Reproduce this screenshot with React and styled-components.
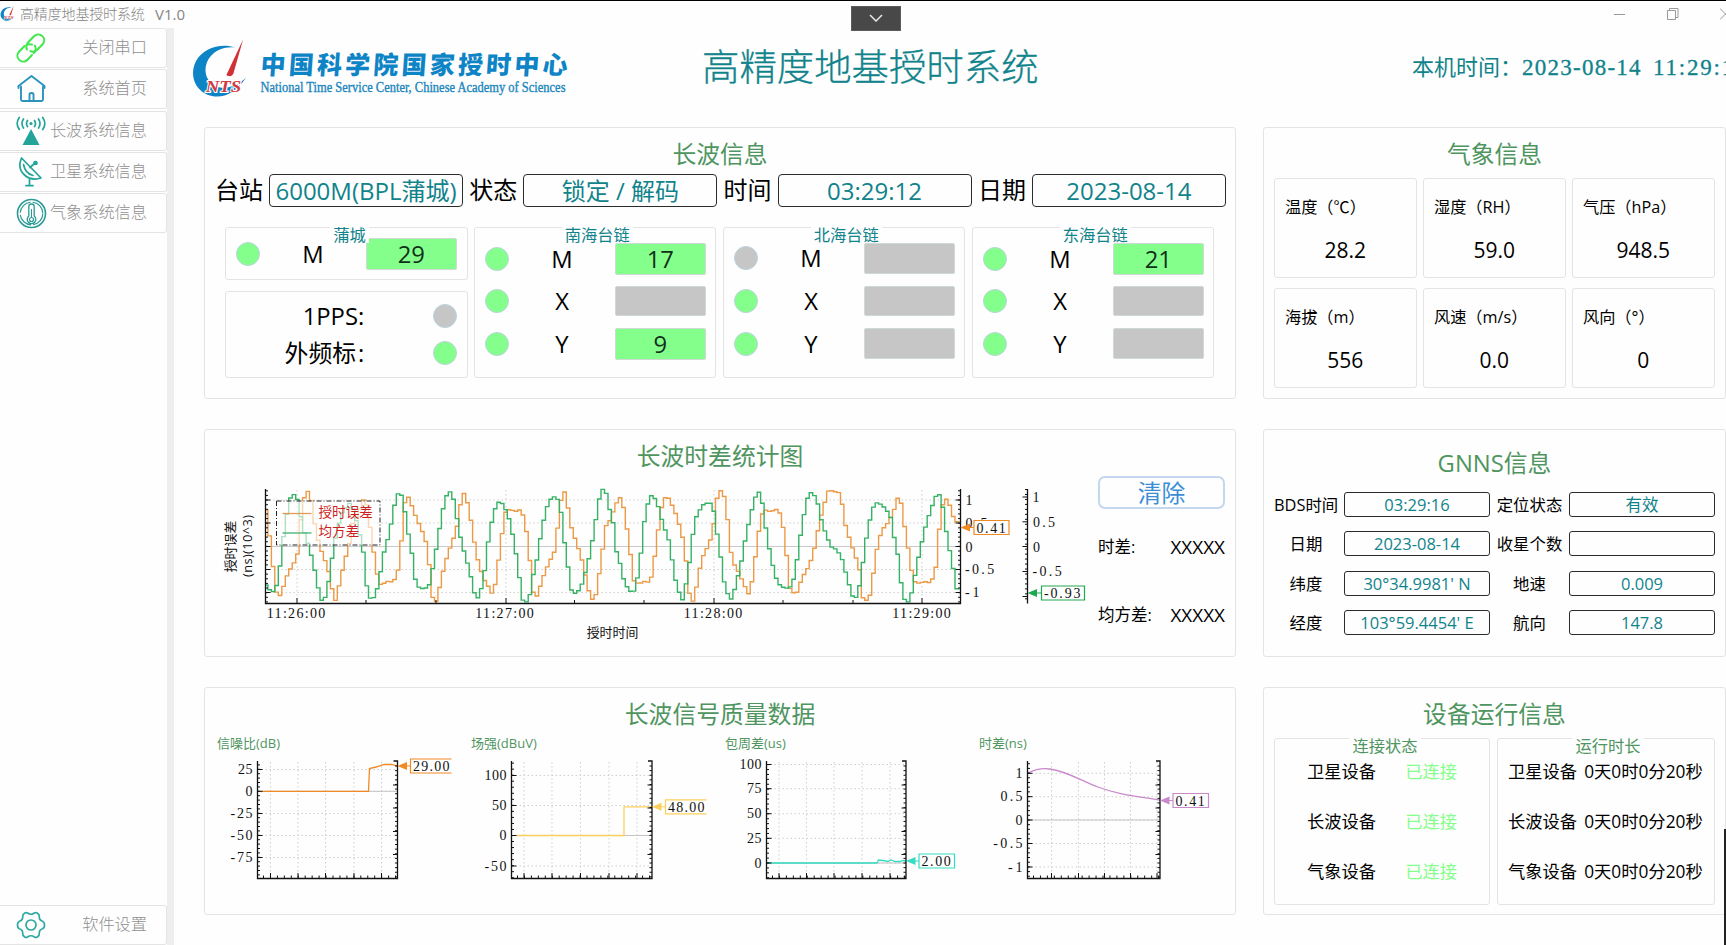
import React from "react";
import styled, { createGlobalStyle } from "styled-components";

const UI = `"Open Sans", "Noto Sans CJK SC", sans-serif`;
const SERIF = `"Liberation Serif", "Noto Sans CJK SC", serif`;
const TEAL = "#10838b";
const GREEN = "#4f9560";
const ON = "#85ff8b";
const OFF = "#c6c6c6";
const LINE = "#e4e4e4";

const Global = createGlobalStyle`
  html, body { margin: 0; padding: 0; background: #fff; }
  * { box-sizing: border-box; }
`;

const Window = styled.div`
  position: relative;
  width: 1726px;
  height: 945px;
  overflow: hidden;
  display: flex;
  flex-direction: column;
  background: #fefefe;
  border-top: 1px solid #000;
  font-family: ${UI};
  color: #000;
  white-space: nowrap;
`;

const TitleBar = styled.header`
  display: flex;
  align-items: center;
  height: 27px;
  flex: none;
  color: #858585;
  font-size: 14px;
  line-height: 20px;
  padding-bottom: 2px;
  font-family: "Open Sans", "Noto Sans CJK SC", sans-serif;
  font-weight: 300;
`;
const AppName = styled.span`
  margin-left: 5px;
  width: 135px;
  letter-spacing: -0.15px;
`;
const Version = styled.span`
  font-size: 15px;
  font-weight: 400;
  flex: 1;
`;
const WindowButtons = styled.div`
  display: flex;
  gap: 41px;
  width: 112px;
  flex: none;
  svg { flex: none; }
`;

const PullTab = styled.div`
  position: absolute;
  left: 851px;
  top: 5px;
  width: 50px;
  height: 25px;
  background: #484848;
  border: 1px solid #5c5c5c;
  display: flex;
  align-items: center;
  justify-content: center;
  padding-bottom: 2px;
`;
const EdgeShadow = styled.div`
  position: absolute;
  right: 0;
  bottom: 0;
  width: 2px;
  height: 116px;
  background: #222;
`;

const Body = styled.div`
  display: flex;
  flex: 1;
  min-height: 0;
`;
const Sidebar = styled.nav`
  width: 167px;
  flex: none;
  display: flex;
  flex-direction: column;
  gap: 1.3px;
`;
const NavItem = styled.div`
  height: 40px;
  margin-top: ${(p) => (p.$last ? "auto" : 0)};
  border: 1px solid ${LINE};
  border-left: 0;
  border-radius: 0 3px 3px 0;
  padding: 0 19px 0 16px;
  display: flex;
  align-items: center;
  justify-content: space-between;
  color: #909090;
  font-family: ${SERIF};
  font-weight: 300;
  font-size: 16.2px;
  line-height: 20px;
  svg { flex: none; }
  span { margin-left: -10px; }
`;
const Divider = styled.div`
  width: 7px;
  flex: none;
  background: #eeeeee;
`;
const Main = styled.main`
  flex: 1;
  min-width: 0;
`;
const Banner = styled.div`
  height: 99px;
  display: flex;
  padding-left: 14px;
`;
const BannerTitle = styled.h1`
  margin: 19px 0 0 130px;
  width: 710px;
  flex: none;
  font-family: ${SERIF};
  font-weight: 300;
  font-size: 37.4px;
  line-height: 44px;
  color: ${TEAL};
  -webkit-text-stroke: 0.3px ${TEAL};
`;
const Clock = styled.div`
  display: flex;
  flex: none;
  margin-top: 26px;
  font-family: ${SERIF};
  font-size: 22px;
  line-height: 28px;
  font-weight: 400;
  color: ${TEAL};
`;
const ClockDate = styled.span`
  width: 131px;
  font-size: 23px;
  letter-spacing: 1.25px;
  -webkit-text-stroke: 0.3px ${TEAL};
`;
const ClockTime = styled.span`
  font-size: 23px;
  letter-spacing: 1.8px;
  -webkit-text-stroke: 0.3px ${TEAL};
`;

const Board = styled.div`
  display: grid;
  grid-template-columns: 1032px 463px;
  grid-template-rows: 272px 228px 228px;
  gap: 30px 27px;
  padding-left: 30px;
`;
const Panel = styled.section`
  border: 1px solid ${LINE};
  border-radius: 3px;
  padding: ${(p) => p.$top || 11}px 10px 0;
`;
const PanelTitle = styled.h2`
  margin: 0;
  text-align: center;
  font-weight: 400;
  font-size: 23.8px;
  line-height: 30px;
  color: ${GREEN};
`;

const Fields = styled.div`
  display: grid;
  grid-template-columns: repeat(4, 254.3px);
  margin-top: 5px;
`;
const Field = styled.div`
  display: flex;
  font-size: 24px;
  line-height: 32px;
  height: 33px;
`;
const FieldLabel = styled.span`
  width: 54px;
`;
const FieldBox = styled.span`
  width: 194px;
  border: 1px solid #2b2b2b;
  border-radius: 4px;
  text-align: center;
  color: ${TEAL};
`;

const Stations = styled.div`
  display: grid;
  grid-template-columns: repeat(4, 242px);
  gap: 7px;
  margin: 20px 0 0 10.25px;
  height: 151px;
`;
const StationStack = styled.div`
  display: grid;
  grid-template-rows: 53px 87px;
  gap: 11px;
`;
const Group = styled.div`
  border: 1px solid ${LINE};
  border-radius: 3px;
`;
const Legend = styled.div`
  width: max-content;
  margin: -1px auto 0;
  padding: 0 3px;
  position: relative;
  left: ${(p) => p.$shift || 0}px;
  background: #fefefe;
  color: ${(p) => p.$color || TEAL};
  font-size: 16.3px;
  line-height: 16px;
`;
const Signals = styled.div`
  display: flex;
  flex-direction: column;
  gap: 12.2px;
  margin-top: ${(p) => p.$top}px;
`;
const Signal = styled.div`
  display: grid;
  grid-template-columns: 24px 105.5px 91px;
  align-items: center;
  padding-left: 10px;
  height: 30.5px;
  font-size: 23.8px;
  line-height: 30px;
  text-align: center;
`;
const Lamp = styled.i`
  width: 24px;
  height: 24px;
  border-radius: 50%;
  border: 1px solid #bcd3de;
  background: ${(p) => (p.$on ? ON : OFF)};
`;
const Level = styled.span`
  height: 100%;
  border-radius: 2px;
  border: 1px solid #cfdad4;
  background: ${(p) => (p.$on ? ON : OFF)};
  color: #10301a;
`;
const Clocks = styled(Group)`
  padding: 6px 10px 0 0;
`;
const ClockRow = styled.div`
  display: grid;
  grid-template-columns: 138px 92.5px;
  justify-items: end;
  align-items: center;
  height: 36.5px;
  font-size: 23.8px;
  line-height: 34px;
`;
const Colon = styled.span`
  margin-left: ${(p) => p.$gap || 0}px;
`;

const WeatherGrid = styled.div`
  display: grid;
  grid-template-columns: repeat(3, 142.5px);
  grid-auto-rows: 100px;
  gap: 10px 6.5px;
  margin-top: 9px;
`;
const WeatherCard = styled(Group)`
  padding: 17px 0 0 10px;
  font-size: 16.2px;
  line-height: 22px;
`;
const Reading = styled.div`
  margin: 17px 10px 0 0;
  text-align: center;
  font-size: 21px;
  line-height: 30px;
`;

const ChartRow = styled.div`
  display: flex;
  margin-top: 4px;
`;
const ChartSide = styled.div`
  margin-left: 7px;
  width: 127px;
  padding-top: 1px;
`;
const ClearButton = styled.button`
  display: block;
  width: 127px;
  height: 33px;
  padding: 0;
  background: #fefefe;
  border: 2px solid #c3d7ee;
  border-radius: 7px;
  font-family: ${UI};
  font-size: 23.8px;
  line-height: 31px;
  color: #3b8ed6;
`;
const Stat = styled.div`
  display: flex;
  justify-content: space-between;
  margin-top: ${(p) => p.$top}px;
  font-size: 16.5px;
  line-height: 24px;
  b { font-weight: 400; font-size: 18.9px; }
`;

const MiniRow = styled.div`
  display: grid;
  grid-template-columns: repeat(4, 254px);
  padding-left: 1px;
  margin-top: 5px;
`;
const MiniTitle = styled.div`
  padding-left: 1px;
  margin-bottom: 1px;
  font-size: 13px;
  line-height: 18px;
  color: ${GREEN};
`;
const MiniSvg = styled.svg`
  display: block;
  overflow: visible;
`;

const GnssGrid = styled.div`
  display: grid;
  grid-template-columns: 70px 146px 79px 146px;
  grid-auto-rows: 25px;
  row-gap: 14.4px;
  margin-top: 14px;
`;
const GnssLabel = styled.span`
  font-size: 16.4px;
  line-height: 25px;
  text-align: center;
  padding-right: ${(p) => p.$pad || 0}px;
`;
const GnssBox = styled.span`
  border: 1px solid #2b2b2b;
  border-radius: 3px;
  text-align: center;
  font-size: 16.5px;
  line-height: 23px;
  color: ${TEAL};
`;

const DeviceRow = styled.div`
  display: grid;
  grid-template-columns: 216px 218px;
  gap: 7px;
  height: 166px;
  margin-top: 8.5px;
`;
const DeviceLine = styled.div`
  display: flex;
  height: 50px;
  gap: ${(p) => p.$gap}px;
  padding-left: ${(p) => p.$left}px;
  font-size: 17.3px;
  line-height: 36px;
`;
const Linked = styled.span`
  color: ${ON};
`;

/* ---------- icons ---------- */
const LinkIcon = () => (
  <svg width="30" height="30" viewBox="0 0 30 30" fill="none" stroke="#3fe84a" strokeWidth="2" strokeLinecap="round">
    <path d="M11 16.5C9.800 14 10.200 11.500 12 9.500L18 3.300C20.500 .8 24 .8 26.400 3.100C28.800 5.500 28.800 9 26.400 11.500L21 17C18.800 19 16.500 19.200 14.300 18.200" />
    <path d="M18.800 12.500C20.200 15 19.800 18 17.800 20M16 22L11.500 26.700C9 29.200 5.500 29.200 3.200 26.900C.8 24.500 .8 21 3.200 18.500L8.500 13M11.500 11.600C12.900 11 14.500 11 16 11.600" />
  </svg>
);
const HomeIcon = () => (
  <svg width="30" height="30" viewBox="0 0 30 30" fill="none" stroke="#2b93bf" strokeWidth="1.900" strokeLinejoin="round" strokeLinecap="round">
    <path d="M2.500 14V12L15.500 2L28.500 12V14" />
    <path d="M5 12.500V25.500Q5 27 6.500 27H25.500Q27 27 27 25.500V12.500" />
    <path d="M13.500 26.500V20.500Q13.500 19 15.500 19T17.500 20.500V26.500" />
  </svg>
);
const TowerIcon = () => (
  <svg width="30" height="30" viewBox="0 0 30 30" fill="none" stroke="#23a49b" strokeWidth="1.700" strokeLinecap="round">
    <circle cx="15" cy="7.500" r="1.600" fill="#23a49b" stroke="none" />
    <path d="M11.500 4.500Q9.500 7.500 11.500 10.500M18.500 4.500Q20.500 7.500 18.500 10.500M7.500 3Q4.500 7.500 7.500 12M22.500 3Q25.500 7.500 22.500 12M3.300 1.500Q-1 7.500 3.300 13.500M26.700 1.500Q31 7.500 26.700 13.500" />
    <path d="M15 13L23.500 29H6.500Z" fill="#23a49b" stroke="none" />
  </svg>
);
const DishIcon = () => (
  <svg width="30" height="30" viewBox="0 0 30 30" fill="none" stroke="#23a49b" strokeWidth="1.700" strokeLinecap="round" strokeLinejoin="round">
    <path d="M5.500 1C2.500 8 4 14 8.500 18C13 22 19 23 25 21Z" />
    <path d="M7.500 7.500C8.500 13 12 17 17 18.500M14 10.500L18.500 6.500" />
    <circle cx="19.500" cy="6" r="1.500" fill="#23a49b" />
    <path d="M13.500 22.500V28M10 28.700H17" />
  </svg>
);
const ThermoIcon = () => (
  <svg width="31" height="31" viewBox="0 0 31 31" fill="none" stroke="#2a9a94">
    <circle cx="15.500" cy="15.500" r="14" strokeWidth="1.600" />
    <circle cx="15.500" cy="15.500" r="11.300" strokeWidth="1.200" strokeDasharray="16 2 16 2" />
    <path d="M12.800 18V8.500Q12.800 6 15.500 6T18.200 8.500V18A4.300 4.300 0 1 1 12.800 18Z" strokeWidth="1.300" fill="#fefefe" />
    <path d="M15.500 11V20" strokeWidth="1" />
    <circle cx="15.500" cy="21.500" r="2" strokeWidth="1.200" />
  </svg>
);
const GearIcon = () => (
  <svg width="30" height="30" viewBox="0 0 30 30" fill="none" stroke="#2fa9a2" strokeWidth="1.700" strokeLinejoin="round">
    <path d="M8.500 3.200Q10 2 11.500 3Q15 5.500 18.500 3Q20 2 21.500 3.200Q23.500 4.500 23.300 6.500Q23 10 26.500 11.200Q28.500 12 28.500 15Q28.500 18 26.500 18.800Q23 20 23.300 23.500Q23.500 25.500 21.500 26.800Q20 28 18.500 27Q15 24.500 11.500 27Q10 28 8.500 26.800Q6.500 25.500 6.700 23.500Q7 20 3.500 18.800Q1.500 18 1.500 15Q1.500 12 3.500 11.200Q7 10 6.700 6.500Q6.500 4.500 8.500 3.200Z" />
    <circle cx="15" cy="15" r="5" />
  </svg>
);

const Crescent = ({ w, h }) => (
  <svg width={w} height={h} viewBox="0 0 58 60">
    <path d="M45 8C30 3 12 9 5 22C-3 38 6 56 24 58C36 59 46 53 56 39C46 48 34 52 24 47C13 41 12 26 20 17C26 10 35 7 45 8Z" fill="#0d84c5" />
    <path d="M53 0L43 35Q40 39 36 36Z" fill="#cf3136" />
    <text x="15" y="53" fontFamily="Liberation Serif, serif" fontWeight="700" fontStyle="italic" fontSize="17" fill="#d2383d" stroke="#fff" strokeWidth="2" paintOrder="stroke" textLength="36" lengthAdjust="spacingAndGlyphs">NTS</text>
  </svg>
);
const BrandSvg = styled.svg`
  flex: none;
  margin-top: 9px;
`;
const Brand = () => (
  <BrandSvg width="384" height="70" viewBox="188 37 384 70">
    <g transform="translate(191 39)"><Crescent w="57" h="60" /></g>
    <text transform="translate(260 73.500) skewX(-4)" fontFamily="'Noto Sans CJK SC', sans-serif" fontWeight="900" fontSize="25" fill="#0d84c5" textLength="307">中国科学院国家授时中心</text>
    <text x="260.500" y="92" fontFamily="Liberation Serif, serif" fontSize="14" fill="#1b86bd" stroke="#1b86bd" strokeWidth=".35" textLength="305" lengthAdjust="spacingAndGlyphs">National Time Service Center, Chinese Academy of Sciences</text>
  </BrandSvg>
);

/* ---------- charts ---------- */
const AxisText = ({ x, y, children, anchor = "start" }) => (
  <text x={x} y={y + 4.7} textAnchor={anchor} fontFamily="Liberation Serif, serif" fontSize="14" fill="#111" textLength={children.length * 7.3}>
    {children}
  </text>
);

const Marker = ({ tip, y, x, w, color, open, children }) => (
  <g>
    <path d={`M${tip} ${y}L${tip + 9.5} ${y - 4}V${y + 4}Z`} fill={color} />
    <path d={`M${tip + 9} ${y}H${x}`} stroke={color} />
    <rect x={x} y={y - 7} width={w} height="14" fill="#fefefe" />
    <path d={open ? `M${x + w} ${y - 7}H${x}V${y + 7}H${x + w}` : `M${x} ${y - 7}H${x + w}V${y + 7}H${x}Z`} fill="none" stroke={color} strokeWidth="1.200" />
    <AxisText x={x + 2.5} y={y + 0.5}>{children}</AxisText>
  </g>
);

const greenEarly = [200,495,208,508,222,515,232,495,243,430,252,350,262,285,272,235,285,222,293,235,302,280,312,330,325,370,338,415,350,470,360,525,370,549,380,525,390,470,402,385,415,320,430,275,450,250,463,270,475,320,490,380,500,490,510,530,517,543,530,520,540,475,555,390,570,340,582,270,592,225,602,216,612,240,622,320,635,380,645,470,655,500,672,507,688,500,698,455,708,400,718,340,730,270,738,235,748,212,758,222,768,260,775,315,788,375,800,415,812,460,825,520,838,537,848,495,858,440,868,350,880,290,892,250,903,244,915,260,930,300,945,370,958,460,970,540,987,549,1000,470,1012,420,1025,340,1038,275,1050,240,1068,228,1082,250,1092,345,1104,430,1116,510,1130,523,1145,500,1160,450,1172,400,1185,325,1197,245,1208,208,1218,209,1228,260,1240,300,1252,400,1265,440,1275,490,1298,520,1310,505,1318,440,1328,375,1338,270,1355,227,1368,237,1380,270,1392,320,1405,345,1418,420,1430,490,1448,545,1460,490,1472,415,1482,330,1492,285,1510,255];
const greenLate = [30,246,42,275,52,345,63,420,73,495,85,530,93,538,103,505,115,455,125,410,135,345,150,280,160,235,175,213,182,245,192,320,205,400,218,460,228,490,248,506,265,500,278,465,288,380,300,305,310,245,320,216,333,225,345,255,355,305,368,345,382,380,400,390,415,420,428,470,440,515,450,543,462,515,472,450,482,370,495,300,508,250,520,248,540,265,555,290,565,350,577,410,587,500,598,548,608,545,620,505,630,440,645,370,660,305,672,270,685,230,697,224,705,250,713,310,722,370,735,430,742,490,750,517];
const orangeEarly = [200,270,203,290,212,360,222,450,230,515,243,528,255,490,265,460,280,435,293,410,300,330,308,270,316,225,330,208,338,260,350,340,365,390,380,430,392,470,400,520,410,546,420,490,435,425,450,370,462,300,475,290,487,245,498,232,508,290,520,380,530,440,537,490,547,495,562,484,582,486,595,455,605,375,615,250,628,230,645,280,660,315,673,345,685,385,692,465,700,535,712,546,722,495,735,435,748,395,762,355,775,310,785,240,797,212,805,255,818,320,828,390,840,440,855,480,868,502,880,526,890,480,900,400,912,310,920,268,935,270,950,274,965,268,975,300,985,360,995,460,1000,515,1012,528,1022,500,1035,460,1050,425,1065,395,1075,320,1085,240,1097,212,1105,260,1115,320,1130,365,1145,410,1160,475,1172,530,1185,546,1195,490,1207,410,1218,320,1232,300,1245,265,1258,232,1268,235,1278,300,1290,370,1300,480,1318,492,1335,484,1352,488,1362,440,1372,360,1382,290,1392,232,1408,235,1425,270,1438,310,1450,355,1462,440,1472,540,1485,545,1495,470,1510,410,1525,380,1540,340,1547,270,1555,225];
const orangeLate = [62,212,72,230,82,300,90,390,102,435,115,460,130,495,145,527,155,470,165,390,177,300,187,268,205,275,230,266,240,310,250,350,255,440,263,505,280,527,292,490,305,460,320,435,335,380,348,310,360,260,375,210,405,218,415,255,425,320,440,370,455,415,465,450,475,535,492,545,505,460,517,375,530,330,550,305,565,270,577,230,588,255,597,330,610,410,620,480,632,490,662,484,672,492,687,440,695,340,705,260,713,232,725,250,737,290,750,310];

const series = (early, late) => {
  const pts = [];
  for (let i = 0; i < early.length; i += 2) pts.push([200 + early[i] / 3, 420 + early[i + 1] / 3]);
  for (let i = 0; i < late.length; i += 2) pts.push([700 + late[i] / 2.904, 420 + late[i + 1] / 3]);
  return pts;
};

// One sample per second, held until the next one arrives.
const stepPath = (pts) => {
  const step = 3.47;
  let k = 0;
  let d = `M${pts[0][0]} ${pts[0][1]}`;
  for (let x = pts[0][0] + step; x < 960; x += step) {
    while (k < pts.length - 2 && pts[k + 1][0] < x) k += 1;
    const [x0, y0] = pts[k];
    const [x1, y1] = pts[k + 1];
    const t = Math.min(1, (x - x0) / (x1 - x0));
    d += `H${(x - step / 2).toFixed(1)}V${(y0 + (y1 - y0) * t).toFixed(1)}`;
  }
  return `${d}H960`;
};
const greenPath = stepPath(series(greenEarly, greenLate));
const orangePath = stepPath(series(orangeEarly, orangeLate));

const span = (from, to, step) => {
  const out = [];
  for (let v = from; v <= to; v += step) out.push(v);
  return out;
};

const TimeChart = () => (
  <svg width="876" height="170" viewBox="215.500 475 876 170" fill="none">
    <g stroke="#cfcfcf" strokeWidth="1" strokeDasharray="1.500 2.500">
      {[500, 523, 569.5, 592.5].map((y) => <path key={y} d={`M266 ${y}H961`} />)}
      {[297.5, 506.5, 714.5, 922.5].map((x) => <path key={x} d={`M${x} 490V603`} />)}
    </g>
    <path d="M266 546.500H961" stroke="#c9c9c9" />
    <path d={orangePath} stroke="#ec9a45" strokeWidth="1.400" />
    <path d={greenPath} stroke="#35b265" strokeWidth="1.400" />
    <path d="M266 489V603.500H961V489M1028 489V603.500" stroke="#111" strokeWidth="1.300" />
    <g stroke="#111">
      {[500, 523, 546.5, 569.5, 592.5].map((y) => <path key={y} d={`M266 ${y}h5M961 ${y}h-5`} />)}
      {span(490.8, 603, 4.63).map((y) => <path key={y} d={`M266 ${y}h2.500M961 ${y}h-2.500`} />)}
      {[497, 521.8, 546.5, 571.5, 596.5].map((y) => <path key={y} d={`M1028 ${y}h-5`} />)}
      {span(489.5, 603.5, 4.97).map((y) => <path key={y} d={`M1028 ${y}h-2.500`} />)}
      {[297.5, 506.5, 714.5, 922.5].map((x) => <path key={x} d={`M${x} 603v-5`} />)}
      {[366.5, 436.5, 575, 644.5, 783.5, 853.5].map((x) => <path key={x} d={`M${x} 603v-3`} />)}
    </g>
    {["11:26:00", "11:27:00", "11:28:00", "11:29:00"].map((t, i) => (
      <AxisText key={t} x={296.5 + i * 208.5} y={613.3} anchor="middle">{t}</AxisText>
    ))}
    <AxisText x={966} y={500.5}>1</AxisText>
    <AxisText x={966} y={523}>0.5</AxisText>
    <AxisText x={966} y={547}>0</AxisText>
    <AxisText x={965.5} y={569.5}>-0.5</AxisText>
    <AxisText x={965.5} y={592.5}>-1</AxisText>
    <AxisText x={1033} y={497.5}>1</AxisText>
    <AxisText x={1033.5} y={522}>0.5</AxisText>
    <AxisText x={1033.5} y={547}>0</AxisText>
    <AxisText x={1033} y={571.5}>-0.5</AxisText>
    <Marker tip={961} y={527.5} x={974.5} w={35} color="#f08a24">0.41</Marker>
    <Marker tip={1028} y={593} x={1042} w={43} color="#20a850">-0.93</Marker>
    <rect x="277" y="501" width="103.500" height="44" fill="#fff" fillOpacity=".6" stroke="#222" strokeDasharray="5 2 1 2" />
    <path d="M283 513.500h29" stroke="#e39a55" strokeWidth="1.300" />
    <path d="M283 533h29" stroke="#45b172" strokeWidth="1.300" />
    <g fontFamily="'Noto Sans CJK SC', sans-serif" fill="#cc1f1f" fontSize="13.600">
      <text x="319" y="516.500">授时误差</text>
      <text x="319" y="535.500">均方差</text>
    </g>
    <g fontFamily="'Open Sans', 'Noto Sans CJK SC', sans-serif" fill="#111" fontSize="12.900" textAnchor="middle">
      <text transform="translate(235 546.500) rotate(-90)">授时误差</text>
      <text transform="translate(252.500 546) rotate(-90)" textLength="62">(ns)(10^3)</text>
      <text x="613" y="637">授时时间</text>
    </g>
  </svg>
);

const minis = [
  { title: "信噪比(dB)", l: 257.5, r: 397.5, grid: [270.5, 298, 325.5, 354, 381.5], ticks: [["25", 769.5], ["0", 791.3], ["-25", 813.5], ["-50", 835.5], ["-75", 857.5]], zero: 791.3, minor: 4.4, color: "#f08a24", line: "M262 791.300H368.500L369.500 768.500L376 767L384 764.500H392L397 766", my: 766, mx: 410.5, mw: 41, open: true, val: "29.00" },
  { title: "场强(dBuV)", l: 511.5, r: 652, grid: [524, 552, 580.5, 609, 637], ticks: [["100", 775.5], ["50", 805.5], ["0", 835.5], ["-50", 866]], zero: 835.5, minor: 6.03, color: "#fbcf5c", line: "M516 835.500H624V806.800H652", my: 806.8, mx: 665.5, mw: 41, open: true, val: "48.00" },
  { title: "包周差(us)", l: 766.5, r: 906, grid: [779, 806.5, 834, 862, 890], ticks: [["100", 764.5], ["75", 788.7], ["50", 813.7], ["25", 838.3], ["0", 863]], zero: 863, minor: 4.92, color: "#34dcc4", line: "M767 863H877L878.500 860L883 860.500L888 861.500L891 860L895 861.500H900L903 860.500L906 861", my: 861, mx: 919, mw: 35.5, val: "2.00" },
  { title: "时差(ns)", l: 1027.5, r: 1160, grid: [1051.5, 1078.5, 1104.5, 1130.5, 1157], ticks: [["1", 773.3], ["0.5", 796.7], ["0", 820], ["-0.5", 843.5], ["-1", 867]], zero: 820, minor: 4.69, color: "#c98acb", line: "M1028 773C1036 769 1043 768 1050 769C1066 771 1082 781 1098 787C1116 794 1134 796 1160 800", my: 800.5, mx: 1173, mw: 35.5, val: "0.41" },
];

const MiniChart = ({ c, i }) => (
  <div>
    <MiniTitle>{c.title}</MiniTitle>
    <MiniSvg width="254" height="130" viewBox={`${216 + i * 254} 753 254 130`} fill="none">
      <g stroke="#cfcfcf" strokeDasharray="1.500 2.500">
        {c.ticks.map(([t, y]) => <path key={t} d={`M${c.l} ${y}H${c.r}`} />)}
        {c.grid.map((x) => <path key={x} d={`M${x} 762V878`} />)}
      </g>
      <path d={`M${c.l} ${c.zero}H${c.r}`} stroke="#c4c4c4" />
      <path d={c.line} stroke={c.color} strokeWidth="1.300" />
      <path d={`M${c.l} 761V878.500H${c.r}V761h-4`} stroke="#111" strokeWidth="1.300" />
      <g stroke="#111">
        {c.ticks.map(([t, y]) => <path key={t} d={`M${c.l} ${y}h5`} />)}
        {span(c.zero - Math.floor((c.zero - 761) / c.minor) * c.minor, 878, c.minor).map((y) => <path key={y} d={`M${c.l} ${y}h2.500`} />)}
        {span(766, 878, 4.62).map((y) => <path key={y} d={`M${c.r} ${y}h-2.500`} />)}
        {[785, 808, 831.5, 854.5].map((y) => <path key={y} d={`M${c.r} ${y}h-4.500`} />)}
        {c.grid.map((x) => <path key={x} d={`M${x} 878v-5`} />)}
        {span(c.l + 6, c.r, 6.95).map((x) => <path key={x} d={`M${x} 878v-2.500`} />)}
      </g>
      {c.ticks.map(([t, y]) => <AxisText key={t} x={c.l - 5} y={y} anchor="end">{t}</AxisText>)}
      <Marker tip={c.r} y={c.my} x={c.mx} w={c.mw} color={c.color} open={c.open}>{c.val}</Marker>
    </MiniSvg>
  </div>
);

/* ---------- data ---------- */
const nav = [
  ["关闭串口", LinkIcon],
  ["系统首页", HomeIcon],
  ["长波系统信息", TowerIcon],
  ["卫星系统信息", DishIcon],
  ["气象系统信息", ThermoIcon],
];
const chains = [
  ["南海台链", [["M", true, "17"], ["X", true, ""], ["Y", true, "9"]]],
  ["北海台链", [["M", false, ""], ["X", true, ""], ["Y", true, ""]]],
  ["东海台链", [["M", true, "21"], ["X", true, ""], ["Y", true, ""]]],
];
const weather = [
  ["温度（℃）", "28.2"], ["湿度（RH）", "59.0"], ["气压（hPa）", "948.5"],
  ["海拔（m）", "556"], ["风速（m/s）", "0.0"], ["风向（°）", "0"],
];
const gnss = [
  ["BDS时间", "03:29:16", "定位状态", "有效"],
  ["日期", "2023-08-14", "收星个数", ""],
  ["纬度", "30°34.9981' N", "地速", "0.009"],
  ["经度", "103°59.4454' E", "航向", "147.8"],
];
const devices = ["卫星设备", "长波设备", "气象设备"];

const SignalRow = ({ name, on, value }) => (
  <Signal>
    <Lamp $on={on} />
    <span>{name}</span>
    <Level $on={value !== ""}>{value}</Level>
  </Signal>
);

export default function App() {
  return (
    <Window>
      <Global />
      <TitleBar>
        <Crescent w="15" h="17" />
        <AppName>高精度地基授时系统</AppName>
        <Version>V1.0</Version>
        <WindowButtons>
          <svg width="12" height="12" stroke="#999"><path d="M0 6.500H11" /></svg>
          <svg width="12" height="12" fill="none" stroke="#999"><path d="M.5 2.500H8.500V11.500H.5ZM2.500 2.500V.5H11V9.500H8.500" /></svg>
          <svg width="12" height="12" stroke="#999"><path d="M0 .5L11 11.500M11 .5L0 11.500" /></svg>
        </WindowButtons>
      </TitleBar>
      <Body>
        <Sidebar>
          {nav.map(([name, Icon]) => (
            <NavItem key={name}><Icon /><span>{name}</span></NavItem>
          ))}
          <NavItem $last><GearIcon /><span>软件设置</span></NavItem>
        </Sidebar>
        <Divider />
        <Main>
          <Banner>
            <Brand />
            <BannerTitle>高精度地基授时系统</BannerTitle>
            <Clock>本机时间：<ClockDate>2023-08-14</ClockDate><ClockTime>11:29:12</ClockTime></Clock>
          </Banner>
          <Board>
            <Panel>
              <PanelTitle>长波信息</PanelTitle>
              <Fields>
                <Field><FieldLabel>台站</FieldLabel><FieldBox>6000M(BPL蒲城)</FieldBox></Field>
                <Field><FieldLabel>状态</FieldLabel><FieldBox>锁定 / 解码</FieldBox></Field>
                <Field><FieldLabel>时间</FieldLabel><FieldBox>03:29:12</FieldBox></Field>
                <Field><FieldLabel>日期</FieldLabel><FieldBox>2023-08-14</FieldBox></Field>
              </Fields>
              <Stations>
                <StationStack>
                  <Group>
                    <Legend $shift={3}>蒲城</Legend>
                    <Signals $top={-5}><SignalRow name="M" on value="29" /></Signals>
                  </Group>
                  <Clocks>
                    <ClockRow><span>1PPS<Colon>:</Colon></span><Lamp /></ClockRow>
                    <ClockRow><span>外频标<Colon $gap={2}>:</Colon></span><Lamp $on /></ClockRow>
                  </Clocks>
                </StationStack>
                {chains.map(([name, rows]) => (
                  <Group key={name}>
                    <Legend $shift={2}>{name}</Legend>
                    <Signals $top={0}>
                      {rows.map(([n, on, value]) => <SignalRow key={n} name={n} on={on} value={value} />)}
                    </Signals>
                  </Group>
                ))}
              </Stations>
            </Panel>

            <Panel>
              <PanelTitle>气象信息</PanelTitle>
              <WeatherGrid>
                {weather.map(([name, value]) => (
                  <WeatherCard key={name}>{name}<Reading>{value}</Reading></WeatherCard>
                ))}
              </WeatherGrid>
            </Panel>

            <Panel>
              <PanelTitle>长波时差统计图</PanelTitle>
              <ChartRow>
                <TimeChart />
                <ChartSide>
                  <ClearButton>清除</ClearButton>
                  <Stat $top={26}>时差:<b>XXXXX</b></Stat>
                  <Stat $top={44}>均方差:<b>XXXXX</b></Stat>
                </ChartSide>
              </ChartRow>
            </Panel>

            <Panel $top={18}>
              <PanelTitle>GNNS信息</PanelTitle>
              <GnssGrid>
                {gnss.map(([a, b, c, d]) => (
                  <React.Fragment key={a}>
                    <GnssLabel $pad={6}>{a}</GnssLabel><GnssBox>{b}</GnssBox>
                    <GnssLabel>{c}</GnssLabel><GnssBox>{d}</GnssBox>
                  </React.Fragment>
                ))}
              </GnssGrid>
            </Panel>

            <Panel>
              <PanelTitle>长波信号质量数据</PanelTitle>
              <MiniRow>
                {minis.map((c, i) => <MiniChart key={c.title} c={c} i={i} />)}
              </MiniRow>
            </Panel>

            <Panel>
              <PanelTitle>设备运行信息</PanelTitle>
              <DeviceRow>
                <Group>
                  <Legend $color={GREEN} $shift={3}>连接状态</Legend>
                  {devices.map((d) => (
                    <DeviceLine key={d} $left={32} $gap={29}><span>{d}</span><Linked>已连接</Linked></DeviceLine>
                  ))}
                </Group>
                <Group>
                  <Legend $color={GREEN} $shift={2}>运行时长</Legend>
                  {devices.map((d) => (
                    <DeviceLine key={d} $left={10} $gap={7}><span>{d}</span><span>0天0时0分20秒</span></DeviceLine>
                  ))}
                </Group>
              </DeviceRow>
            </Panel>
          </Board>
        </Main>
      </Body>
      <PullTab>
        <svg width="14" height="8" fill="none" stroke="#e8e8e8" strokeWidth="1.500"><path d="M1 1L7 7L13 1" /></svg>
      </PullTab>
      <EdgeShadow />
    </Window>
  );
}
